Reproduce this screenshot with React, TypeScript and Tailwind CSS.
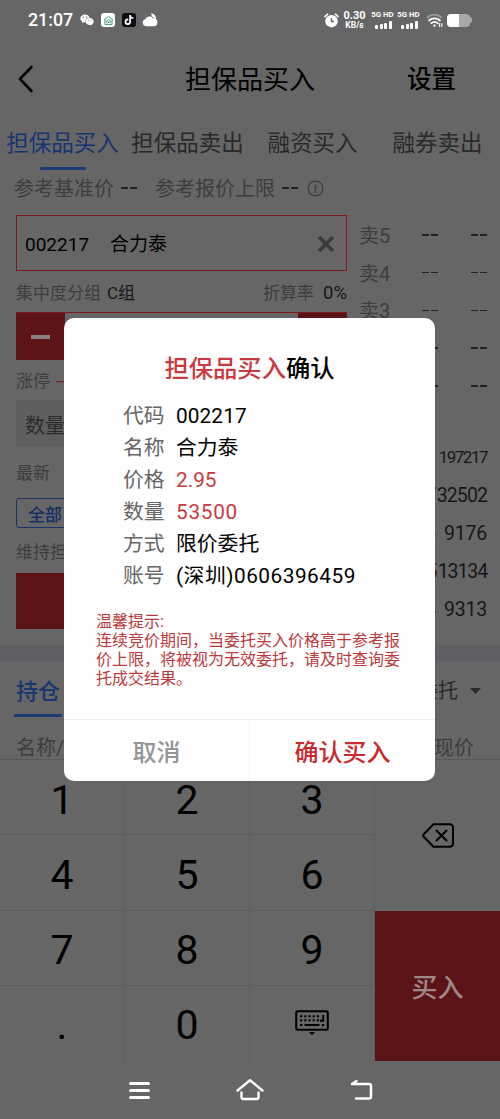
import { FaWeixin, FaTiktok } from "react-icons/fa";

const confirmRows = [
  { label: "代码", value: "002217", style: "text-black tracking-[0.1px]" },
  { label: "名称", value: "合力泰", style: "text-black" },
  { label: "价格", value: "2.95", style: "text-[#c9393f]" },
  { label: "数量", value: "53500", style: "text-[#c9393f] tracking-[0.7px]" },
  { label: "方式", value: "限价委托", style: "text-black" },
  { label: "账号", value: "(深圳)0606396459", style: "text-black tracking-[0.5px]" },
];

const asks = ["卖5", "卖4", "卖3", "卖2", "卖1"];

const bids = [
  { price: "2.95", volume: "197217", style: "text-[17px] tracking-[-1.5px]", gap: "gap-[12px]" },
  { price: "2.97", volume: "32502", style: "text-[19.500px] tracking-[-0.9px]", gap: "gap-[1px]" },
  { price: "2.96", volume: "9176", style: "text-[19.500px] tracking-[-0.2px]", gap: "gap-[8px]" },
  { price: "2.95", volume: "13134", style: "text-[19.500px] tracking-[-1.1px]", gap: "gap-[1px]" },
  { price: "2.94", volume: "9313", style: "text-[19.500px] tracking-[-0.2px]", gap: "gap-[8px]" },
];

function SignalBars() {
  return (
    <div className="flex h-[25px] w-[23px] flex-col items-center justify-between">
      <span className="mt-[2px] whitespace-nowrap text-[7.800px] font-bold leading-[9px]">5G HD</span>
      <div className="mb-[4px] ml-[2px] flex items-end gap-[1.500px]">
        <i className="h-[4px] w-[3px] rounded-[1px] bg-white" />
        <i className="h-[5px] w-[3px] rounded-[1px] bg-white" />
        <i className="h-[6px] w-[3px] rounded-[1px] bg-white" />
        <i className="h-[8px] w-[3px] rounded-[1px] bg-white" />
      </div>
    </div>
  );
}

function StatusBar() {
  return (
    <div className="flex h-[40px] items-center pl-[28px] pr-[28px] text-white">
      <span className="w-[52px] text-[17.800px] font-medium leading-none">21:07</span>
      <FaWeixin size={14} />
      <div className="ml-[7px] flex h-[14px] w-[14px] items-center justify-center rounded-[3px] bg-white">
        <svg width="11" height="11" viewBox="0 0 11 11" fill="none" stroke="#3c9a72" strokeWidth="1">
          <path d="M1 5 5.5 1.3 10 5M2 4.6v5h7v-5M3.8 8V5.7L5.5 4.4l1.7 1.3V8M5.5 6.5V8" />
        </svg>
      </div>
      <div className="ml-[7px] flex h-[14px] w-[14px] items-center justify-center rounded-[3px] bg-[#0b0b12]">
        <FaTiktok size={10} />
      </div>
      <svg className="ml-[6px]" width="16" height="14" viewBox="0 0 16 14" fill="white">
        <path d="M9 .6a4.300 4.300 0 0 1 4.400 6.300C12.800 5 11.200 3.700 9.800 3.400 9.700 2.200 9.400 1.300 9 .6z" />
        <path d="M4 13.300a3.600 3.600 0 0 1-.8-7A4.400 4.400 0 0 1 11 5.300a4 4 0 0 1 .8 8z" />
      </svg>

      <div className="ml-auto flex items-center">
        <svg width="15" height="15" viewBox="0 0 15 15" fill="none">
          <circle cx="7.500" cy="8.200" r="6.200" fill="white" />
          <path d="M1 3.600 3.600 1.200M14 3.600l-2.600-2.400" stroke="white" strokeWidth="1.600" strokeLinecap="round" />
          <path d="M7.500 5v3.500H10" stroke="#666" strokeWidth="1.300" />
        </svg>
        <div className="ml-[4px] flex w-[23px] flex-col items-center font-bold">
          <span className="h-[10px] text-[11px] leading-[10px]">0.30</span>
          <span className="h-[8px] text-[8.500px] leading-[8px]">KB/s</span>
        </div>
        <div className="ml-[5px] flex gap-[3px]">
          <SignalBars />
          <SignalBars />
        </div>
        <svg className="ml-[6px]" width="18" height="15" viewBox="0 0 18 15" fill="none" strokeLinecap="round">
          <path d="M1.500 4.500a10 10 0 0 1 14 0" stroke="#999" strokeWidth="1.800" />
          <path d="M3 7.500a8 8 0 0 1 11 0" stroke="white" strokeWidth="1.800" />
          <path d="M5.300 10.200a5 5 0 0 1 6.400 0" stroke="white" strokeWidth="1.800" />
          <circle cx="8.500" cy="12.600" r="1.200" fill="white" />
          <path d="M13.500 10.500v2.800M15.800 10.500v2.800" stroke="white" strokeWidth="1.200" />
        </svg>
        <div className="ml-[3px] flex h-[13px] w-[23px] overflow-hidden rounded-[4px] bg-[#a8a8a8]">
          <i className="w-[12px] bg-white" />
        </div>
        <i className="h-[6px] w-[2px] rounded-r bg-[#a8a8a8]" />
      </div>
    </div>
  );
}

function OrderForm() {
  return (
    <div className="w-[331px] shrink-0">
      <div className="flex h-[56px] items-center border-[1.500px] border-[#7d1a1e] pl-[8px] pr-[11px] pt-[2px] text-[19px] text-black">
        <span className="w-[85px]">002217</span>
        <span>合力泰</span>
        <svg className="ml-auto" width="18" height="18" viewBox="0 0 18 18" stroke="#3b3b3b" strokeWidth="3.600">
          <path d="M2 2l14 14M16 2 2 16" />
        </svg>
      </div>
      <div className="flex h-[41px] items-center pt-[4px] text-[17px] text-[#3d3d3d]">
        <span>集中度分组</span>
        <span className="ml-[6px] text-[#16161c]">C组</span>
        <span className="ml-auto">折算率</span>
        <span className="ml-[5px] w-[28px] whitespace-nowrap text-right text-[18.500px] text-[#16161c]">0%</span>
      </div>
      <div className="flex h-[48px] border-t border-[#7d1a1e]">
        <div className="flex w-[49px] items-center justify-center bg-[#5c1417]">
          <i className="h-[4px] w-[19px] bg-[#8f8080]" />
        </div>
        <div className="flex-1 bg-[#666]" />
        <div className="w-[49px] bg-[#5c1417]" />
      </div>
      <div className="flex h-[40px] items-center pt-[3px] text-[17px] text-[#3d3d3d]">
        涨停<span className="ml-[6px] text-[#7d1a1e]">--</span>
      </div>
      <div className="flex h-[47px] items-center bg-[#5f5f5f] pl-[9px] pt-[5px] text-[20px] text-[#2b2b2b]">数量</div>
      <div className="flex h-[51px] items-center pt-[1px] text-[17px] text-[#3d3d3d]">最新</div>
      <div className="flex h-[30px] w-[76px] items-center rounded-[3px] border-[1.500px] border-[#1b3468] pl-[11px] pt-[4px] text-[17px] font-medium text-[#142f63]">
        全部
      </div>
      <div className="flex h-[45px] items-center pt-[4px] text-[17px] text-[#3d3d3d]">维持担保</div>
      <div className="h-[56px] bg-[#5a1416]" />
    </div>
  );
}

function OrderBook() {
  return (
    <div className="flex flex-1 flex-col pl-[12px] pr-[13px] pt-[1px]">
      {asks.map((name) => (
        <div key={name} className="flex h-[38px] items-center text-[20px] text-[#3d3d3d]">
          <span className="w-[63px] pt-[2px]">{name}</span>
          <Dashes />
          <Dashes className="ml-auto" />
        </div>
      ))}
      <div className="h-[34px]" />
      {bids.map((bid, i) => (
        <div key={i} className={`flex h-[38.300px] items-center justify-end text-[#16161a] ${bid.style} ${bid.gap}`}>
          <span className="text-[#5c1417]">{bid.price}</span>
          <span>{bid.volume}</span>
        </div>
      ))}
    </div>
  );
}

function Dashes({ className = "" }: { className?: string }) {
  return (
    <span className={`flex gap-[2px] ${className}`}>
      <i className="h-[1.500px] w-[7px] bg-[#222]" />
      <i className="h-[1.500px] w-[7px] bg-[#222]" />
    </span>
  );
}

function Key({ label }: { label: string }) {
  return (
    <div className="flex items-center justify-center border-b border-r border-[#5d5d5d] pt-[6px] text-[41px] leading-none text-black nth-[n+10]:border-b-transparent">
      {label}
    </div>
  );
}

function Keypad() {
  return (
    <div className="flex h-[302px] border-t border-[#585858]">
      <div className="grid w-[375px] grid-cols-3 grid-rows-4">
        {["1", "2", "3", "4", "5", "6", "7", "8", "9", ".", "0"].map((key) => (
          <Key key={key} label={key} />
        ))}
        <div className="flex items-center justify-center border-r border-[#5d5d5d]">
          <svg width="34" height="26" viewBox="0 0 34 26" fill="none" stroke="black">
            <rect x="1.200" y="1.200" width="31.600" height="18.600" rx="1.500" strokeWidth="2" />
            <path d="M5 6.200h20M5 10.300h20" strokeWidth="1.900" strokeDasharray="2.200 2" />
            <path d="M28.200 5v5.800H25M5 15h2.500M9.500 15h15M26.800 15h2.400" strokeWidth="1.900" />
            <path d="M14 22h6l-3 3.200z" fill="black" stroke="none" />
          </svg>
        </div>
      </div>
      <div className="flex flex-1 flex-col">
        <div className="flex h-[151px] items-center justify-center">
          <svg width="32" height="25" viewBox="0 0 32 25" fill="none" stroke="black" strokeWidth="2" strokeLinejoin="round" strokeLinecap="round">
            <path d="M11.500 1.300H28a3 3 0 0 1 3 3v16.400a3 3 0 0 1-3 3H11.500L1.500 13.500q-.8-1 0-2z" />
            <path d="m14.500 7.500 10 10m0-10-10 10" />
          </svg>
        </div>
        <div className="flex flex-1 items-center justify-center bg-[#5a1416] pt-[4px] text-[26px] font-medium text-[#a08787]">
          买入
        </div>
      </div>
    </div>
  );
}

function NavBar() {
  return (
    <div className="mx-auto grid w-[333px] flex-1 grid-cols-3 place-items-center">
      <div className="flex w-[21px] flex-col gap-[4px]">
        <i className="h-[3px] rounded-full bg-white" />
        <i className="h-[3px] rounded-full bg-white" />
        <i className="h-[3px] rounded-full bg-white" />
      </div>
      <svg width="28" height="24" viewBox="0 0 28 24" fill="none" stroke="white" strokeWidth="2.400" strokeLinecap="round" strokeLinejoin="round">
        <path d="M1.500 12.500 14 2.200l12.500 10.300M5.500 14.500V19q0 2 2 2h13q2 0 2-2v-4.500" />
      </svg>
      <svg width="24" height="22" viewBox="0 0 24 22" fill="none" stroke="white" strokeWidth="2.500" strokeLinecap="round" strokeLinejoin="round">
        <path d="M7.500 2 3 5h17q2 0 2 2v10.500q0 2-2 2H7" />
      </svg>
    </div>
  );
}

function ConfirmDialog() {
  return (
    <div className="absolute left-[64px] top-[318px] flex h-[463px] w-[371px] flex-col rounded-[10px] bg-white">
      <h2 className="mt-[33px] text-center text-[24.300px] font-medium leading-[36px] text-black">
        <span className="text-[#c9393f]">担保品买入</span>确认
      </h2>
      <div className="mt-[13px] pl-[59px]">
        {confirmRows.map((row) => (
          <div key={row.label} className="flex h-[32px] items-center text-[20.800px]">
            <span className="w-[53px] text-[#666]">{row.label}</span>
            <span className={row.style}>{row.value}</span>
          </div>
        ))}
      </div>
      <div className="ml-[32px] mt-[20px] w-[306px] text-[16px] leading-[19px] text-[#b9393d]">
        <p>温馨提示:</p>
        <p>连续竞价期间，当委托买入价格高于参考报价上限，将被视为无效委托，请及时查询委托成交结果。</p>
      </div>
      <div className="mt-auto flex h-[62px] border-t border-[#f0f0f0] text-[24px] font-medium">
        <button className="w-[186px] border-r border-[#f4f4f4] pt-[4px] text-[#959595]">取消</button>
        <button className="flex-1 pt-[4px] text-[#c9292f]">确认买入</button>
      </div>
    </div>
  );
}

export default function App() {
  return (
    <div className="relative flex h-[1119px] w-[500px] flex-col overflow-hidden bg-[#666] font-[Roboto,'Noto_Sans_CJK_SC',sans-serif] leading-none">
      <StatusBar />

      <header className="flex h-[78px] items-center text-[26px] text-black">
        <svg className="ml-[18px]" width="18" height="28" viewBox="0 0 18 28" fill="none" stroke="black" strokeWidth="2.600" strokeLinecap="round" strokeLinejoin="round">
          <path d="M13.500 2 2 14l11.500 12" />
        </svg>
        <h1 className="ml-[149px] pt-[2px]">担保品买入</h1>
        <span className="ml-[92px] pt-[2px] text-[24.500px] font-medium">设置</span>
      </header>

      <nav className="grid h-[52px] grid-cols-4 text-center text-[22.500px] text-[#292929]">
        <div className="flex flex-col items-center text-[#17356f]">
          <span className="flex h-[49px] items-center whitespace-nowrap pt-[2px]">担保品买入</span>
          <i className="h-[3px] w-[46px] rounded-full bg-[#1d3a74]" />
        </div>
        <span className="flex h-[49px] items-center justify-center whitespace-nowrap pt-[2px]">担保品卖出</span>
        <span className="flex h-[49px] items-center justify-center pt-[2px]">融资买入</span>
        <span className="flex h-[49px] items-center justify-center pt-[2px]">融券卖出</span>
      </nav>

      <div className="flex h-[36px] items-center pl-[14px] text-[20px] text-[#3d3d3d]">
        <span className="pt-[2px]">参考基准价</span>
        <Dashes className="ml-[7px] w-[34px]" />
        <span className="pt-[2px]">参考报价上限</span>
        <Dashes className="ml-[7px]" />
        <svg className="ml-[9px]" width="17" height="17" viewBox="0 0 17 17" fill="none" stroke="#3d3d3d" strokeWidth="1.200">
          <circle cx="8.500" cy="8.500" r="7.400" />
          <path d="M7 7.200h2l-1 5h1.500M9 4.200v1.500" />
        </svg>
      </div>

      <div className="mt-[9px] flex h-[414px] pl-[16px]">
        <OrderForm />
        <OrderBook />
      </div>

      <div className="mt-[16px] h-[16px] bg-[#5f5f64]" />

      <div className="flex h-[56px] justify-between pl-[14px] pr-[18px]">
        <div className="w-[48px] text-[22px] font-medium text-[#17356f]">
          <div className="flex h-[53px] items-center pl-[2px] pt-[8px]">持仓</div>
          <i className="block h-[3px] bg-[#1d3a74]" />
        </div>
        <div className="flex items-center gap-[11px] pt-[3px] text-[20px] text-[#292929]">
          委托
          <svg width="13" height="8" viewBox="0 0 13 8" fill="#292929">
            <path d="M1 1h11L6.500 7z" />
          </svg>
        </div>
      </div>

      <div className="flex h-[42px] items-center justify-between pl-[16px] pr-[26px] pt-[19px] text-[20px] text-[#3d3d3d]">
        <span>名称/市值</span>
        <span>现价</span>
      </div>

      <Keypad />
      <NavBar />
      <ConfirmDialog />
    </div>
  );
}
